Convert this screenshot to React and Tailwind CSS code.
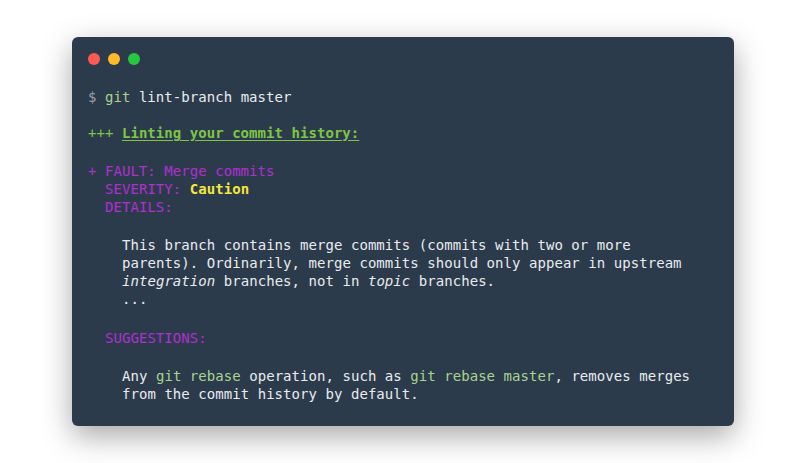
import React from 'react';

const mono = { fontFamily: '"DejaVu Sans Mono", "Liberation Mono", monospace' };

const Purple = ({ children }) => <span className="text-[#b02fd0]">{children}</span>;
const Cmd = ({ children }) => <span className="text-[#a9d38f]">{children}</span>;

export default function App() {
    return (
        <div className="w-full h-[463px] bg-white flex items-center justify-center">
            <div
                className="w-[662px] h-[389px] bg-[#2c3b4c] rounded-[6px] shadow-[0_10px_30px_rgba(0,0,0,0.35)] px-4 pt-[16px] pb-7 text-[14px] leading-[18px] tracking-[0.05px] text-[#e9ebee]"
                style={mono}
            >
                <div className="flex gap-2">
                    <span className="w-3 h-3 rounded-full bg-[#fc5a55]" />
                    <span className="w-3 h-3 rounded-full bg-[#fdbb2c]" />
                    <span className="w-3 h-3 rounded-full bg-[#27c73f]" />
                </div>

                <div className="mt-[23px] whitespace-pre">
                    <span className="text-[#96a1ad]">$ </span>
                    <Cmd>git</Cmd> lint-branch master
                </div>

                <div className="mt-[18px] whitespace-pre text-[#7fc545]">
                    +++ <span className="font-bold underline underline-offset-2">Linting your commit history:</span>
                </div>

                <div className="mt-5 whitespace-pre">
                    <Purple>+ FAULT: Merge commits</Purple>
                </div>
                <div className="whitespace-pre pl-[17px]">
                    <Purple>SEVERITY: </Purple>
                    <span className="font-bold text-[#f5e83c]">Caution</span>
                </div>
                <div className="whitespace-pre pl-[17px]">
                    <Purple>DETAILS:</Purple>
                </div>

                <div className="mt-5 pl-[34px] whitespace-pre">
                    <div>This branch contains merge commits (commits with two or more</div>
                    <div>parents). Ordinarily, merge commits should only appear in upstream</div>
                    <div>
                        <em>integration</em> branches, not in <em>topic</em> branches.
                    </div>
                    <div>...</div>
                </div>

                <div className="mt-[21px] pl-[17px] whitespace-pre">
                    <Purple>SUGGESTIONS:</Purple>
                </div>

                <div className="mt-5 pl-[34px] whitespace-pre">
                    <div>
                        Any <Cmd>git rebase</Cmd> operation, such as <Cmd>git rebase master</Cmd>, removes merges
                    </div>
                    <div>from the commit history by default.</div>
                </div>
            </div>
        </div>
    );
}
